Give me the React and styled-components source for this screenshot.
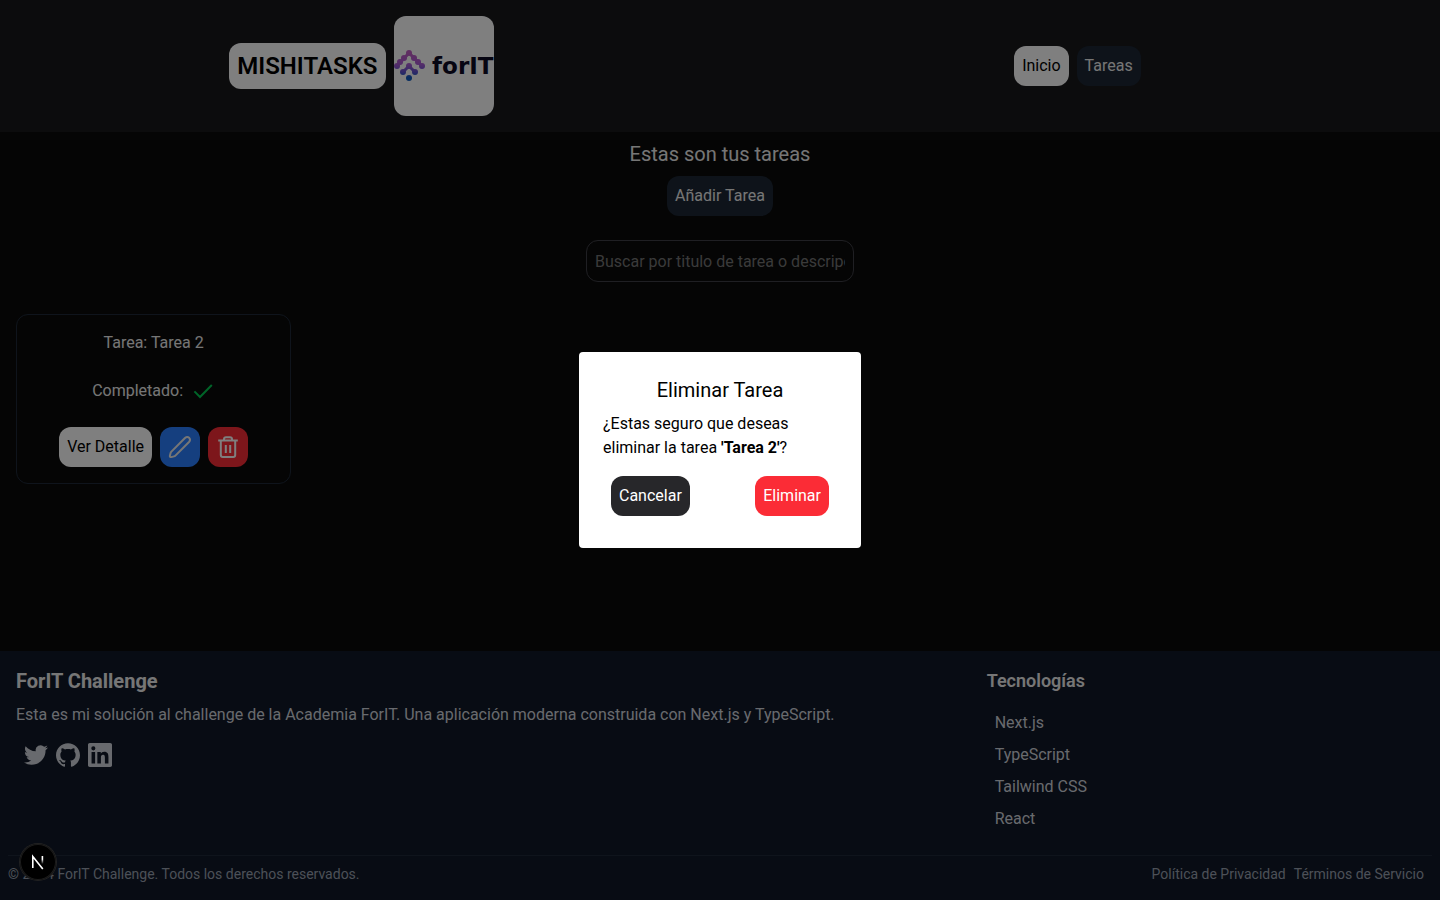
import React from 'react';
import styled, { createGlobalStyle, css } from 'styled-components';

const GlobalStyle = createGlobalStyle`
  *, *::before, *::after { box-sizing: border-box; }
  body {
    margin: 0;
    background: #0a0a0a;
    color: #ededed;
    font-family: Roboto, "Liberation Sans", sans-serif;
    font-size: 16px;
    line-height: 24px;
  }
  h1, h2, h3, p, ul { margin: 0; padding: 0; }
  ul { list-style: none; }
  a { color: inherit; text-decoration: none; }
`;

const Page = styled.div`
  min-height: 100vh;
  display: flex;
  flex-direction: column;
`;

const Header = styled.header`
  display: flex;
  justify-content: space-around;
  align-items: center;
  padding: 16px 0;
  background: #18181b;
`;

const Brand = styled.div`
  display: flex;
  align-items: center;
  gap: 8px;
`;

const BrandTitle = styled.h1`
  padding: 8px;
  border-radius: 12px;
  background: #fff;
  color: #000;
  font-size: 24px;
  line-height: 30px;
  font-weight: 600;
`;

const LogoTile = styled.div`
  display: flex;
  align-items: center;
  justify-content: space-between;
  width: 100px;
  height: 100px;
  border-radius: 12px;
  background: #fff;
  color: #0d0a24;
  font-family: "DejaVu Sans", sans-serif;
  font-size: 23px;
  font-weight: 700;
  overflow: hidden;
`;

const Nav = styled.nav`
  display: flex;
  gap: 8px;
  padding: 0 70px 0 62px;
`;

const tones = {
  light: css`background: #fff; color: #000;`,
  slate: css`background: #1c2735; color: #ededed;`,
  dark: css`background: #27272a; color: #fff;`,
  blue: css`background: #2b7fff; color: #ededed;`,
  red: css`background: #fb2c36; color: #fff;`,
};

const buttonLook = css`
  display: inline-flex;
  align-items: center;
  justify-content: center;
  padding: 8px;
  border: 0;
  border-radius: 12px;
  font: inherit;
  cursor: pointer;
  ${({ $tone }) => tones[$tone]}
`;

const Button = styled.button`${buttonLook}`;
const ButtonLink = styled.a`${buttonLook}`;

const Main = styled.main`
  flex: 1;
  display: flex;
  flex-direction: column;
  align-items: center;
  padding: 8px 16px;
`;

const Title = styled.h2`
  font-size: 20px;
  line-height: 28px;
  font-weight: 400;
  text-align: center;
  margin-bottom: 8px;
`;

const Search = styled.input`
  width: 268px;
  height: 42px;
  margin: 24px 0 32px;
  padding: 8px;
  border: 1px solid #3f3f46;
  border-radius: 12px;
  background: transparent;
  color: inherit;
  font: inherit;
  &::placeholder { color: #757575; }
`;

const TaskGrid = styled.div`
  align-self: stretch;
  display: grid;
  grid-template-columns: repeat(5, 1fr);
  gap: 8px;
`;

const TaskCard = styled.article`
  display: flex;
  flex-direction: column;
  align-items: center;
  gap: 24px;
  padding: 16px;
  border: 1px solid #1e2939;
  border-radius: 12px;
`;

const Row = styled.div`
  display: flex;
  align-items: center;
  gap: 8px;
`;

const Footer = styled.footer`
  padding: 8px;
  background: #101828;
`;

const FooterColumns = styled.div`
  display: grid;
  grid-template-columns: repeat(3, 1fr);
  gap: 32px;
`;

const FooterColumn = styled.section`
  grid-column: span ${({ $span }) => $span};
  display: flex;
  flex-direction: column;
  gap: 8px;
  padding: 8px;
  color: #d1d5dc;
`;

const FooterTitle = styled.h3`
  color: #ededed;
  font-size: ${({ $size }) => $size}px;
  line-height: 28px;
  font-weight: ${({ $weight }) => $weight};
`;

const Socials = styled.div`
  display: flex;
  gap: 8px;
  padding: 8px;
  a, svg { display: block; }
`;

const TechList = styled.ul`
  display: flex;
  flex-direction: column;
  gap: 8px;
  padding: 8px;
`;

const FooterBottom = styled.div`
  display: flex;
  justify-content: space-between;
  margin-top: 8px;
  padding: 8px 0;
  border-top: 1px solid #1e2939;
  color: #99a1af;
  font-size: 14px;
  line-height: 20px;
`;

const Legal = styled.div`
  display: flex;
  gap: 8px;
  padding: 0 8px;
`;

const Overlay = styled.div`
  position: fixed;
  inset: 0;
  display: flex;
  align-items: center;
  justify-content: center;
  background: rgba(0, 0, 0, 0.5);
`;

const Dialog = styled.div`
  width: 282px;
  padding: 24px;
  border-radius: 4px;
  background: #fff;
  color: #000;
`;

const DialogActions = styled.div`
  display: flex;
  justify-content: space-between;
  margin-top: 8px;
  padding: 8px;
`;

const DevBadge = styled.button`
  position: fixed;
  left: 20px;
  bottom: 20px;
  width: 36px;
  height: 36px;
  padding: 0;
  border: 0;
  border-radius: 50%;
  background: #000;
  box-shadow: 0 0 0 1px #222, inset 0 0 0 1px #1c1c1c;
  svg { display: block; margin: auto; }
`;

const LOGO_DOTS = [
  [15, 3], [10, 8], [20, 8], [6, 12], [24, 12], [3, 16], [28, 16],
  [15, 16], [9, 22], [21, 22], [15, 28],
];

function LogoMark() {
  return (
    <svg width="31" height="32" viewBox="0 0 31 32" aria-hidden="true">
      <defs>
        <linearGradient id="mark" gradientUnits="userSpaceOnUse" x1="0" y1="0" x2="0" y2="32">
          <stop offset="0.1" stopColor="#c05cc4" />
          <stop offset="0.45" stopColor="#a85ad4" />
          <stop offset="0.7" stopColor="#5c52d0" />
          <stop offset="0.85" stopColor="#0f5ac0" />
        </linearGradient>
      </defs>
      <path d="M3 16 L15 3 L28 16 M9 22 L15 16 L21 22" fill="none" stroke="url(#mark)" strokeWidth="3" />
      <g fill="url(#mark)">
        {LOGO_DOTS.map(([x, y]) => <circle key={`${x}-${y}`} cx={x} cy={y} r="3" />)}
      </g>
    </svg>
  );
}

function CheckIcon() {
  return (
    <svg width="24" height="24" viewBox="0 0 24 24" fill="none" stroke="#00c951" strokeWidth="2" role="img" aria-label="Sí">
      <path d="M3.4 12.4 L9 18 L20.8 6" />
    </svg>
  );
}

function PencilIcon() {
  return (
    <svg width="24" height="24" viewBox="0 0 24 24" fill="none" stroke="currentColor" strokeWidth="2" strokeLinejoin="round" aria-hidden="true">
      <path d="M2.6 18 Q2.8 17.2 3.4 16.6 L17 3 Q19.2 1.1 21.2 2.8 Q22.9 4.8 21 7 L7.4 20.6 Q6.8 21.2 6 21.4 L3.2 22.1 Q1.7 22.3 1.9 20.8 Z" />
    </svg>
  );
}

function TrashIcon() {
  return (
    <svg width="24" height="24" viewBox="0 0 24 24" fill="none" stroke="currentColor" strokeWidth="2" strokeLinejoin="round" aria-hidden="true">
      <path d="M2.2 5.5 H21.8 M8 5.5 V4.2 Q8 2.2 10 2.2 H14 Q16 2.2 16 4.2 V5.5 M4.8 5.5 V20 Q4.8 22 6.8 22 H17.2 Q19.2 22 19.2 20 V5.5 M9.8 10 V18 M14.2 10 V18" />
    </svg>
  );
}

const SOCIAL_ICONS = [
  {
    name: 'Twitter',
    path: 'M23.953 4.57a10 10 0 01-2.825.775 4.958 4.958 0 002.163-2.723c-.951.555-2.005.959-3.127 1.184a4.92 4.92 0 00-8.384 4.482C7.69 8.095 4.067 6.13 1.64 3.162a4.822 4.822 0 00-.666 2.475c0 1.71.87 3.213 2.188 4.096a4.904 4.904 0 01-2.228-.616v.06a4.923 4.923 0 003.946 4.827 4.996 4.996 0 01-2.212.085 4.936 4.936 0 004.604 3.417 9.867 9.867 0 01-6.102 2.105c-.39 0-.779-.023-1.17-.067a13.995 13.995 0 007.557 2.209c9.053 0 13.998-7.496 13.998-13.985 0-.21 0-.42-.015-.63A9.935 9.935 0 0024 4.59z',
  },
  {
    name: 'GitHub',
    path: 'M12 .297c-6.63 0-12 5.373-12 12 0 5.303 3.438 9.8 8.205 11.385.6.113.82-.258.82-.577 0-.285-.01-1.04-.015-2.04-3.338.724-4.042-1.61-4.042-1.61C4.422 18.07 3.633 17.7 3.633 17.7c-1.087-.744.084-.729.084-.729 1.205.084 1.838 1.236 1.838 1.236 1.07 1.835 2.809 1.305 3.495.998.108-.776.417-1.305.76-1.605-2.665-.3-5.466-1.332-5.466-5.93 0-1.31.465-2.38 1.235-3.22-.135-.303-.54-1.523.105-3.176 0 0 1.005-.322 3.3 1.23.96-.267 1.98-.399 3-.405 1.02.006 2.04.138 3 .405 2.28-1.552 3.285-1.23 3.285-1.23.645 1.653.24 2.873.12 3.176.765.84 1.23 1.91 1.23 3.22 0 4.61-2.805 5.625-5.475 5.92.42.36.81 1.096.81 2.22 0 1.606-.015 2.896-.015 3.286 0 .315.21.69.825.57C20.565 22.092 24 17.592 24 12.297c0-6.627-5.373-12-12-12',
  },
  {
    name: 'LinkedIn',
    path: 'M20.447 20.452h-3.554v-5.569c0-1.328-.027-3.037-1.852-3.037-1.853 0-2.136 1.445-2.136 2.939v5.667H9.351V9h3.414v1.561h.046c.477-.9 1.637-1.85 3.37-1.85 3.601 0 4.267 2.37 4.267 5.455v6.286zM5.337 7.433a2.062 2.062 0 01-2.063-2.065 2.064 2.064 0 112.063 2.065zm1.782 13.019H3.555V9h3.564v11.452zM22.225 0H1.771C.792 0 0 .774 0 1.729v20.542C0 23.227.792 24 1.771 24h20.451C23.2 24 24 23.227 24 22.271V1.729C24 .774 23.2 0 22.222 0h.003z',
  },
];

export default function App() {
  return (
    <>
      <GlobalStyle />
      <Page>
        <Header>
          <Brand>
            <BrandTitle>MISHITASKS</BrandTitle>
            <LogoTile><LogoMark />forIT</LogoTile>
          </Brand>
          <Nav>
            <ButtonLink href="#inicio" $tone="light">Inicio</ButtonLink>
            <ButtonLink href="#tareas" $tone="slate">Tareas</ButtonLink>
          </Nav>
        </Header>
        <Main>
          <Title>Estas son tus tareas</Title>
          <Button $tone="slate">Añadir Tarea</Button>
          <Search
            type="text"
            aria-label="Buscar tareas"
            placeholder="Buscar por titulo de tarea o descripcion"
          />
          <TaskGrid>
            <TaskCard>
              <p>Tarea: Tarea 2</p>
              <Row>Completado: <CheckIcon /></Row>
              <Row>
                <Button $tone="light">Ver Detalle</Button>
                <Button $tone="blue" aria-label="Editar"><PencilIcon /></Button>
                <Button $tone="red" aria-label="Eliminar tarea"><TrashIcon /></Button>
              </Row>
            </TaskCard>
          </TaskGrid>
        </Main>
        <Footer>
          <FooterColumns>
            <FooterColumn $span={2}>
              <FooterTitle $size={20} $weight={700}>ForIT Challenge</FooterTitle>
              <p>
                Esta es mi solución al challenge de la Academia ForIT. Una aplicación moderna construida con Next.js y TypeScript.
              </p>
              <Socials>
                {SOCIAL_ICONS.map(({ name, path }) => (
                  <a key={name} href={`#${name.toLowerCase()}`} aria-label={name}>
                    <svg width="24" height="24" viewBox="0 0 24 24" fill="currentColor" aria-hidden="true">
                      <path d={path} />
                    </svg>
                  </a>
                ))}
              </Socials>
            </FooterColumn>
            <FooterColumn $span={1}>
              <FooterTitle $size={18} $weight={600}>Tecnologías</FooterTitle>
              <TechList>
                <li>Next.js</li>
                <li>TypeScript</li>
                <li>Tailwind CSS</li>
                <li>React</li>
              </TechList>
            </FooterColumn>
          </FooterColumns>
          <FooterBottom>
            <p>© 2024 ForIT Challenge. Todos los derechos reservados.</p>
            <Legal>
              <a href="#privacidad">Política de Privacidad</a>
              <a href="#terminos">Términos de Servicio</a>
            </Legal>
          </FooterBottom>
        </Footer>
      </Page>
      <Overlay>
        <Dialog role="dialog" aria-modal="true" aria-labelledby="dialog-title">
          <Title as="h3" id="dialog-title">Eliminar Tarea</Title>
          <p>¿Estas seguro que deseas eliminar la tarea <strong>'Tarea 2'</strong>?</p>
          <DialogActions>
            <Button $tone="dark">Cancelar</Button>
            <Button $tone="red">Eliminar</Button>
          </DialogActions>
        </Dialog>
      </Overlay>
      <DevBadge aria-label="Next.js">
        <svg width="36" height="36" viewBox="0 0 36 36" fill="none" strokeWidth="1.6">
          <defs>
            <linearGradient id="stem" x1="0" y1="12" x2="0" y2="20" gradientUnits="userSpaceOnUse">
              <stop offset="0.4" stopColor="#fff" />
              <stop offset="1" stopColor="#fff" stopOpacity="0" />
            </linearGradient>
          </defs>
          <path d="M12.8 24 V12.5 L22.8 25" stroke="#fff" />
          <path d="M22.4 12 V20" stroke="url(#stem)" />
        </svg>
      </DevBadge>
    </>
  );
}
